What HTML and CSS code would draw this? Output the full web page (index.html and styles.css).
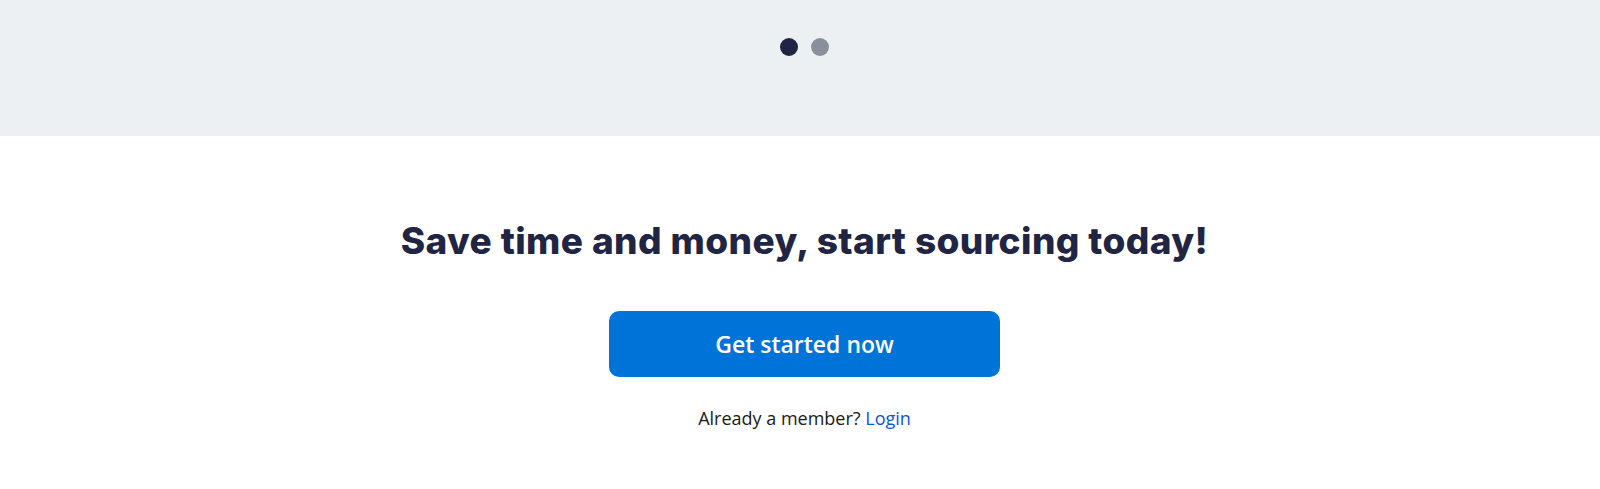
FILE: index.html
```html
<!DOCTYPE html>
<html lang="en">
<head>
<meta charset="utf-8">
<title>Start sourcing</title>
<link rel="stylesheet" href="styles.css">
</head>
<body>
<section class="band">
  <div class="dots">
    <span class="dot dot-active"></span>
    <span class="dot"></span>
  </div>
</section>
<section class="cta">
  <h2 class="cta-title">Save time and money, start sourcing today!</h2>
  <a class="cta-button" href="#">Get started now</a>
  <p class="cta-login">Already a member? <a href="#">Login</a></p>
</section>
</body>
</html>
```
FILE: styles.css
```css
html, body {
  margin: 0;
  padding: 0;
  background: #ffffff;
}
body {
  font-family: "Open Sans", "Noto Sans", sans-serif;
}
.band {
  height: 136px;
  background: #edf0f3;
  box-sizing: border-box;
  padding: 38px 0 0 9px;
}
.dots {
  display: flex;
  justify-content: center;
  gap: 13px;
}
.dot {
  width: 18px;
  height: 18px;
  border-radius: 50%;
  background: #8a8f9c;
}
.dot-active {
  background: #1f2542;
}
.cta {
  display: flex;
  flex-direction: column;
  align-items: center;
  padding: 80px 0 0 9px;
}
.cta-title {
  margin: 0;
  font-family: Inter, sans-serif;
  font-weight: 800;
  font-size: 37px;
  line-height: 50px;
  color: #1f2542;
  letter-spacing: 0.4px;
}
.cta-button {
  margin-top: 45px;
  width: 391px;
  height: 66px;
  display: flex;
  align-items: center;
  justify-content: center;
  background: #0073d8;
  border-radius: 10px;
  color: #ffffff;
  font-weight: 600;
  font-size: 23px;
  text-decoration: none;
}
.cta-login {
  margin: 29px 0 0;
  font-size: 18px;
  line-height: 24px;
  color: #1a1a1a;
}
.cta-login a {
  color: #0b57d0;
  text-decoration: none;
}
```
